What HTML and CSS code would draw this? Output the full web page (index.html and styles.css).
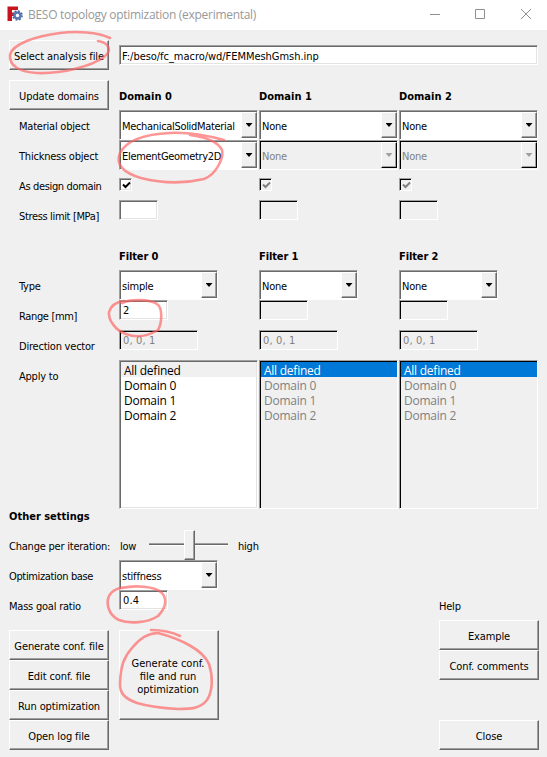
FILE: index.html
```html
<!DOCTYPE html>
<html lang="en">
<head>
<meta charset="utf-8">
<title>BESO topology optimization (experimental)</title>
<link rel="stylesheet" href="styles.css">
</head>
<body>
<header class="titlebar">
  <svg class="app-icon" width="16" height="16" viewBox="0 0 16 16">
    <path d="M0.500 0.500H11V4H5V6.500H8V10H5V15H0.500Z" fill="#c9141e"/>
    <circle cx="10.500" cy="9.500" r="3" fill="none" stroke="#5878b4" stroke-width="2.400"/>
    <circle cx="10.500" cy="9.500" r="4.600" fill="none" stroke="#4a6490" stroke-width="1.500" stroke-dasharray="1.800 1.813"/>
  </svg>
  <h1 class="title">BESO topology optimization (experimental)</h1>
  <svg class="window-controls" width="104" height="12" viewBox="0 0 104 12" fill="none" stroke="#8f8f8f">
    <path d="M0 5.500H10M45.500 0.500H54.500V9.500H45.500ZM91 0L101 10M101 0L91 10"/>
  </svg>
</header>
<main class="dialog">
  <div class="row">
    <button class="btn">Select analysis file</button>
    <div class="field path wide">F:/beso/fc_macro/wd/FEMMeshGmsh.inp</div>
  </div>
  <div class="row spaced">
    <button class="btn">Update domains</button>
    <b class="head">Domain 0</b><b class="head">Domain 1</b><b class="head">Domain 2</b>
  </div>
  <div class="row">
    <span class="label inset">Material object</span>
    <div class="combo"><span class="mech">MechanicalSolidMaterial</span><i class="drop"></i></div>
    <div class="combo"><span>None</span><i class="drop"></i></div>
    <div class="combo"><span>None</span><i class="drop"></i></div>
  </div>
  <div class="row">
    <span class="label inset">Thickness object</span>
    <div class="combo"><span class="geom">ElementGeometry2D</span><i class="drop"></i></div>
    <div class="combo off"><span>None</span><i class="drop"></i></div>
    <div class="combo off"><span>None</span><i class="drop"></i></div>
  </div>
  <div class="row">
    <span class="label inset tight">As design domain</span>
    <div class="check"><svg viewBox="0 0 9 9"><path d="M1 3.500L3.500 6L8 1.500"/></svg></div>
    <div class="check off"><svg viewBox="0 0 9 9"><path d="M1 3.500L3.500 6L8 1.500"/></svg></div>
    <div class="check off"><svg viewBox="0 0 9 9"><path d="M1 3.500L3.500 6L8 1.500"/></svg></div>
  </div>
  <div class="row">
    <span class="label inset tight">Stress limit [MPa]</span>
    <div class="field w39"></div><div class="field w39 off"></div><div class="field w39 off"></div>
  </div>
  <div class="row spaced">
    <span></span>
    <b class="head filter">Filter 0</b><b class="head filter">Filter 1</b><b class="head filter">Filter 2</b>
  </div>
  <div class="row">
    <span class="label inset">Type</span>
    <div class="combo small"><span>simple</span><i class="drop"></i></div>
    <div class="combo small"><span>None</span><i class="drop"></i></div>
    <div class="combo small"><span>None</span><i class="drop"></i></div>
  </div>
  <div class="row">
    <span class="label inset tight">Range [mm]</span>
    <div class="field w49">2</div><div class="field w49 off"></div><div class="field w49 off"></div>
  </div>
  <div class="row">
    <span class="label inset">Direction vector</span>
    <div class="field w79 off">0, 0, 1</div><div class="field w79 off">0, 0, 1</div><div class="field w79 off">0, 0, 1</div>
  </div>
  <div class="row lists">
    <span class="label inset">Apply to</span>
    <ul class="list"><li class="current">All defined</li><li>Domain 0</li><li>Domain 1</li><li>Domain 2</li></ul>
    <ul class="list off"><li class="selected">All defined</li><li>Domain 0</li><li>Domain 1</li><li>Domain 2</li></ul>
    <ul class="list off"><li class="selected">All defined</li><li>Domain 0</li><li>Domain 1</li><li>Domain 2</li></ul>
  </div>
  <div class="row"><b class="head">Other settings</b></div>
  <div class="row">
    <span class="label">Change per iteration:</span>
    <div class="slider-group wide">
      <span class="label low">low</span>
      <div class="slider"><i class="thumb"></i></div>
      <span class="label">high</span>
    </div>
  </div>
  <div class="row">
    <span class="label tight">Optimization base</span>
    <div class="combo small"><span>stiffness</span><i class="drop"></i></div>
  </div>
  <div class="row">
    <span class="label">Mass goal ratio</span>
    <div class="field w49">0.4</div>
  </div>
  <div class="actions">
    <div class="stack left">
      <button class="btn">Generate conf. file</button>
      <button class="btn">Edit conf. file</button>
      <button class="btn">Run optimization</button>
      <button class="btn">Open log file</button>
    </div>
    <button class="btn big">Generate conf.<br>file and run<br>optimization</button>
    <div class="stack help">
      <span class="label">Help</span>
      <button class="btn">Example</button>
      <button class="btn">Conf. comments</button>
      <button class="btn close">Close</button>
    </div>
  </div>
</main>
<svg class="marks" width="547" height="757" viewBox="0 0 547 757">
  <path d="M110 38C98 32 76 31 60 33C36 36 12 44 10 55C9 66 20 72 37 73C62 74 92 66 104 57C112 51 110 43 98 41"/>
  <path d="M224 140C205 135 187 132 170 133C145 134 127 140 120 153C115 165 124 173 141 178C161 183 183 184 204 179C217 174 224 157 222 150C218 142 205 137 190 135"/>
  <path d="M122 303C130 299 150 299 157 304C163 308 162 323 158 330C148 336 136 338 126 334C116 331 108 320 109 312C111 305 116 302 124 301"/>
  <path d="M122 588C134 585 155 586 162 593C168 600 165 609 158 616C148 623 129 624 119 620C108 615 106 603 109 596C112 590 119 587 130 587"/>
  <path d="M151 630C160 630 172 632 180 636M158 633C181 639 203 650 209 664C213 676 213 691 207 700C200 709 190 709 178 709C160 708 147 706 137 703C126 699 119 694 120 682C121 665 124 657 132 648C140 638 149 633 158 633"/>
</svg>
</body>
</html>
```
FILE: styles.css
```css
* { box-sizing: border-box; }
body {
  margin: 0;
  width: 547px;
  height: 757px;
  overflow: hidden;
  position: relative;
  background: #f0f0f0;
  color: #000;
  font: 11px/14px "DejaVu Sans Condensed", "DejaVu Sans", sans-serif;
  font-stretch: condensed;
  letter-spacing: -0.22px;
  white-space: nowrap;
}
.titlebar {
  display: flex;
  align-items: center;
  height: 30px;
  padding: 0 13px 0 7px;
  background: #fff;
}
.app-icon { margin-top: -2px; }
.title {
  flex: 1;
  margin: 0 0 0 5px;
  color: #999;
  font: 12px/16px "Open Sans", sans-serif;
  letter-spacing: -0.29px;
}
.dialog { padding: 10px 8px 0 9px; }
.row {
  display: grid;
  grid-template-columns: 110px 140px 140px 139px;
  height: 30px;
}
.spaced { margin-top: 10px; }
.wide { grid-column: 2 / -1; }
.label, .head { align-self: center; padding-top: 4px; }
.inset { padding-left: 10px; }
.tight { letter-spacing: -0.35px; }
.head { font-weight: bold; letter-spacing: 0; }
.filter { letter-spacing: -0.1px; }
.btn {
  width: 100px;
  height: 30px;
  padding: 4px 0 0;
  border: 1px solid;
  border-color: #fff #696969 #696969 #fff;
  box-shadow: inset -1px -1px #a0a0a0;
  background: #f0f0f0;
  color: inherit;
  font: inherit;
  letter-spacing: -0.1px;
}
.field {
  height: 20px;
  padding: 3px 3px 0;
  border: 1px solid;
  border-color: #a0a0a0 #fff #fff #a0a0a0;
  box-shadow: inset 1px 1px #696969, inset -1px -1px #e3e3e3;
  background: #fff;
  letter-spacing: 0.15px;
}
.path { align-self: center; width: 419px; padding: 4px 2px 0; letter-spacing: -0.04px; }
.w39 { width: 39px; }
.w49 { width: 49px; }
.w79 { width: 79px; }
.combo {
  display: flex;
  justify-content: space-between;
  width: 139px;
  height: 30px;
  padding: 1px 0 1px 1px;
  border: 1px solid;
  border-color: #a0a0a0 #fff #fff #a0a0a0;
  box-shadow: inset 1px 1px #696969;
  background: #fff;
}
.combo span { padding: 8px 0 0 1px; }
.combo .mech { letter-spacing: -0.32px; }
.combo .geom { letter-spacing: -0.3px; }
.small { width: 99px; }
.drop {
  display: flex;
  justify-content: center;
  width: 16px;
  height: 26px;
  border: 1px solid;
  border-color: #fff #696969 #696969 #fff;
  box-shadow: inset -1px -1px #a0a0a0;
  background: #f0f0f0;
}
.drop::before {
  content: "";
  width: 7px;
  height: 4px;
  margin-top: 10px;
  background: #000;
  clip-path: polygon(0 0, 100% 0, 50% 100%);
}
.field.off, .combo.off {
  background: #f0f0f0;
  color: #808080;
  box-shadow: inset 1px 1px #000;
}
.off .drop { border-color: #fff #000 #000 #fff; }
.off .drop::before { background: #a0a0a0; }
.check {
  width: 13px;
  height: 13px;
  margin-top: 8px;
  padding: 1px;
  border: 1px solid;
  border-color: #a0a0a0 #fff #fff #a0a0a0;
  box-shadow: inset 1px 1px #696969, inset -1px -1px #e3e3e3;
  background: #fff;
}
.check svg { display: block; width: 9px; height: 9px; margin: 1px; fill: none; stroke: #000; stroke-width: 2; }
.check.off { background: #f0f0f0; box-shadow: inset 1px 1px #000; }
.check.off svg { stroke: #808080; }
.lists { height: 140px; }
.lists .label { align-self: start; padding-top: 10px; }
.list {
  height: 149px;
  margin: 0;
  padding: 1px 2px;
  width: 139px;
  border: 1px solid;
  border-color: #a0a0a0 #fff #fff #a0a0a0;
  box-shadow: inset 1px 1px #696969, inset -1px -1px #e3e3e3;
  background: #fff;
  list-style: none;
  font: 12px/17px "Open Sans", sans-serif;
  letter-spacing: -0.25px;
}
.list li { height: 15px; margin: 0 -1px; padding-left: 3px; }
.list.off { background: #f0f0f0; color: #808080; box-shadow: inset 1px 1px #000; }
.list .current { background: #f0f0f0; }
.list .selected { background: #0078d7; color: #fff; margin-right: -2px; }
.slider-group { display: flex; }
.low { width: 30px; padding-left: 1px; }
.slider {
  display: flex;
  justify-content: center;
  width: 79px;
  height: 30px;
  margin-right: 10px;
  background: linear-gradient(#a0a0a0 0 1px, #696969 1px 2px, #fff 2px 3px) 0 13px / 100% 3px no-repeat;
}
.thumb {
  width: 11px;
  height: 30px;
  margin-left: 2px;
  border: 1px solid;
  border-color: #fff #696969 #696969 #fff;
  box-shadow: inset -1px -1px #a0a0a0;
  background: #f0f0f0;
}
.actions { display: flex; }
.stack { display: flex; flex-direction: column; }
.left { margin: 10px 10px 0 0; }
.big { height: 90px; margin-top: 10px; line-height: 13px; padding: 3px 2px 0 0; letter-spacing: 0; }
.help { width: 100px; margin: -30px 0 0 220px; }
.help .label { align-self: start; height: 30px; padding-top: 10px; }
.close { margin-top: 40px; }
.marks {
  position: absolute;
  inset: 0;
  fill: none;
  stroke: #ff6464;
  stroke-opacity: .68;
  stroke-width: 2.6;
  stroke-linecap: round;
  stroke-linejoin: round;
  pointer-events: none;
}
```
